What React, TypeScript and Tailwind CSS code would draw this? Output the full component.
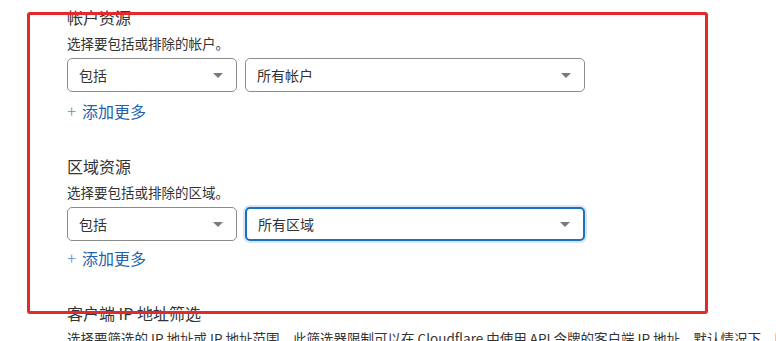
import React from 'react';

const font = { fontFamily: '"Noto Sans CJK SC", "Noto Sans", sans-serif' };

function Caret() {
  return (
    <svg width="10" height="5" viewBox="0 0 10 5" className="shrink-0">
      <path d="M0 0 L10 0 L5 5 Z" fill="#7a7a7a" />
    </svg>
  );
}

function Select({ value, width, focused }: { value: string; width: string; focused?: boolean }) {
  return (
    <div
      className={`flex h-[34px] items-center justify-between rounded-[5px] bg-white pl-[11px] pr-[13px] text-[14px] text-[#333] ${width} ${
        focused
          ? 'border-2 border-[#1d6fc4] ring-2 ring-[#d6e6f7]'
          : 'border border-[#8c8c8c]'
      }`}
    >
      <span>{value}</span>
      <Caret />
    </div>
  );
}

function AddMore() {
  return (
    <div className="flex h-[22px] items-center gap-[6px] text-[16px] text-[#2163ad]">
      <span className="text-[17px] font-light text-[#5b8ed0]">+</span>
      <span>添加更多</span>
    </div>
  );
}

function ResourceBlock({ title, hint, value, focused }: { title: string; hint: string; value: string; focused?: boolean }) {
  return (
    <div className="flex flex-col">
      <div className="h-[22px] text-[16px] leading-[22px] text-[#333]">{title}</div>
      <div className="mt-[5px] h-[20px] text-[13.5px] leading-[20px] text-[#333]">{hint}</div>
      <div className="mt-[5px] flex gap-[8px]">
        <Select value="包括" width="w-[170px]" />
        <Select value={value} width="w-[340px]" focused={focused} />
      </div>
    </div>
  );
}

export default function App() {
  return (
    <div className="relative h-[341px] w-[776px] overflow-hidden bg-white" style={font}>
      <div className="flex flex-col pl-[67px] pt-[6px]">
        <ResourceBlock title="帐户资源" hint="选择要包括或排除的帐户。" value="所有帐户" />
        <div className="mt-[8px]">
          <AddMore />
        </div>

        <div className="mt-[33px]">
          <ResourceBlock title="区域资源" hint="选择要包括或排除的区域。" value="所有区域" focused />
        </div>
        <div className="mt-[6px]">
          <AddMore />
        </div>

        <div className="mt-[33px] h-[22px] text-[16px] leading-[22px] text-[#333]">客户端 IP 地址筛选</div>
        <div className="mt-[4px] whitespace-nowrap text-[13.5px] leading-[20px] text-[#333]">
          选择要筛选的 IP 地址或 IP 地址范围。此筛选器限制可以在 Cloudflare 中使用 API 令牌的客户端 IP 地址。默认情况下，所有 IP 地址均被允许。
        </div>
      </div>

      {/* annotation box */}
      <div className="pointer-events-none absolute left-[27px] top-[12px] h-[302px] w-[681px] rounded-[3px] border-[3px] border-[#e3292c]" />
    </div>
  );
}
